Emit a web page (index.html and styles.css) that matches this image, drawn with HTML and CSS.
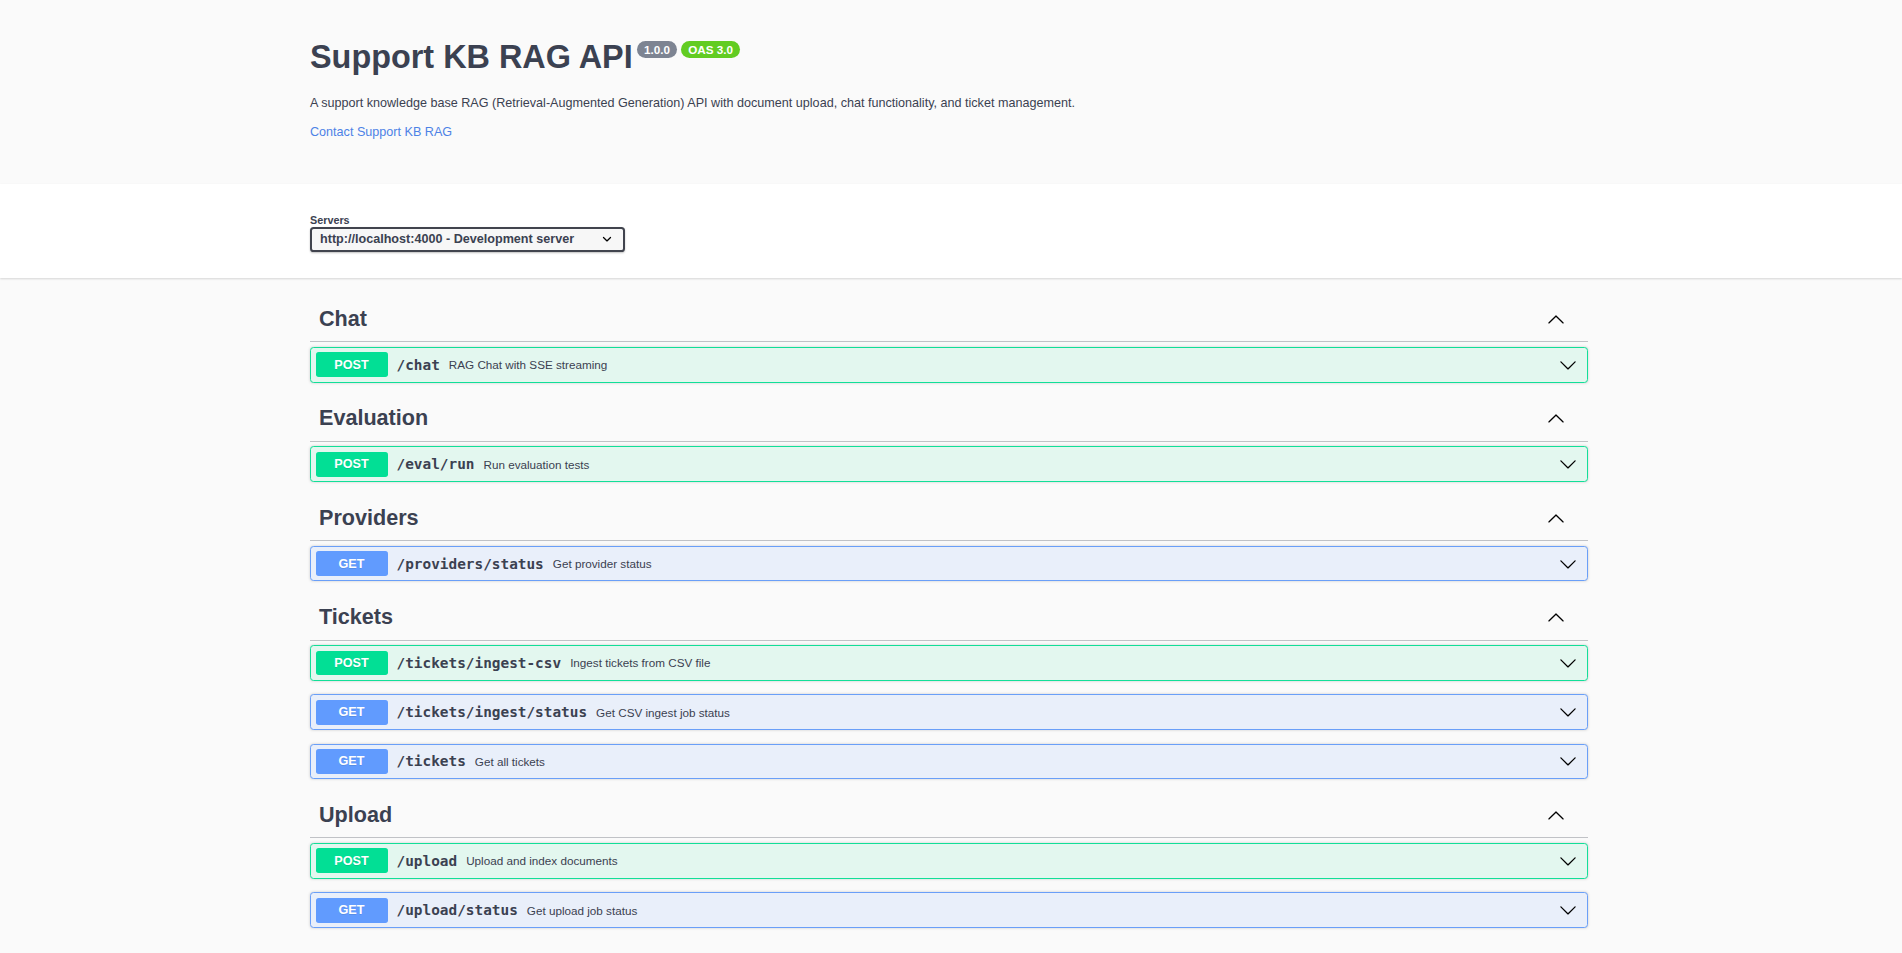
FILE: index.html
```html
<!DOCTYPE html>
<html lang="en">
<head>
<meta charset="utf-8">
<title>Support KB RAG API</title>
<link rel="stylesheet" href="styles.css">
</head>
<body>
<div class="swagger-ui">
  <div class="information-container">
    <div class="wrapper info">
      <h2 class="title">Support KB RAG API<small class="badge version"><pre> 1.0.0 </pre></small><small class="badge oas"><pre> OAS 3.0 </pre></small></h2>
      <p class="description">A support knowledge base RAG (Retrieval-Augmented Generation) API with document upload, chat functionality, and ticket management.</p>
      <a class="contact" href="#">Contact Support KB RAG</a>
    </div>
  </div>

  <div class="scheme-container">
    <div class="wrapper">
      <label class="servers">
        <span class="servers-title">Servers</span>
        <span class="select-wrap">
          <select><option>http://localhost:4000 - Development server</option></select>
          <svg class="select-arrow" viewBox="0 0 20 20"><path d="M13.418 7.859a.695.695 0 0 1 .978 0 .68.68 0 0 1 0 .969l-3.908 3.83a.697.697 0 0 1-.979 0l-3.908-3.830a.68.68 0 0 1 0-.969.695.695 0 0 1 .978 0L10 11l3.418-3.141z"/></svg>
        </span>
      </label>
    </div>
  </div>

  <div class="wrapper operations">
    <section class="tag-section">
      <h3 class="opblock-tag"><span class="tag-name">Chat</span><button class="expand"><svg viewBox="0 0 20 20"><path d="M17.418 14.908c.272.268.709.268.979 0s.271-.701 0-.969l-7.908-7.83a.697.697 0 0 0-.979 0l-7.908 7.83c-.27.268-.27.701 0 .969.271.268.709.268.979 0L10 7.75l7.418 7.158z"/></svg></button></h3>
      <div class="opblock post"><div class="summary"><span class="method">POST</span><span class="path">/chat</span><span class="desc">RAG Chat with SSE streaming</span><button class="arrow-btn"><svg viewBox="0 0 20 20"><path d="M17.418 6.109c.272-.268.709-.268.979 0s.271.701 0 .969l-7.908 7.83c-.27.268-.707.268-.979 0l-7.908-7.83c-.27-.268-.27-.701 0-.969.271-.268.709-.268.979 0L10 13.25l7.418-7.141z"/></svg></button></div></div>
    </section>

    <section class="tag-section">
      <h3 class="opblock-tag"><span class="tag-name">Evaluation</span><button class="expand"><svg viewBox="0 0 20 20"><path d="M17.418 14.908c.272.268.709.268.979 0s.271-.701 0-.969l-7.908-7.83a.697.697 0 0 0-.979 0l-7.908 7.83c-.27.268-.27.701 0 .969.271.268.709.268.979 0L10 7.75l7.418 7.158z"/></svg></button></h3>
      <div class="opblock post"><div class="summary"><span class="method">POST</span><span class="path">/eval/run</span><span class="desc">Run evaluation tests</span><button class="arrow-btn"><svg viewBox="0 0 20 20"><path d="M17.418 6.109c.272-.268.709-.268.979 0s.271.701 0 .969l-7.908 7.83c-.27.268-.707.268-.979 0l-7.908-7.83c-.27-.268-.27-.701 0-.969.271-.268.709-.268.979 0L10 13.25l7.418-7.141z"/></svg></button></div></div>
    </section>

    <section class="tag-section">
      <h3 class="opblock-tag"><span class="tag-name">Providers</span><button class="expand"><svg viewBox="0 0 20 20"><path d="M17.418 14.908c.272.268.709.268.979 0s.271-.701 0-.969l-7.908-7.83a.697.697 0 0 0-.979 0l-7.908 7.83c-.27.268-.27.701 0 .969.271.268.709.268.979 0L10 7.75l7.418 7.158z"/></svg></button></h3>
      <div class="opblock get"><div class="summary"><span class="method">GET</span><span class="path">/providers/status</span><span class="desc">Get provider status</span><button class="arrow-btn"><svg viewBox="0 0 20 20"><path d="M17.418 6.109c.272-.268.709-.268.979 0s.271.701 0 .969l-7.908 7.83c-.27.268-.707.268-.979 0l-7.908-7.83c-.27-.268-.27-.701 0-.969.271-.268.709-.268.979 0L10 13.25l7.418-7.141z"/></svg></button></div></div>
    </section>

    <section class="tag-section">
      <h3 class="opblock-tag"><span class="tag-name">Tickets</span><button class="expand"><svg viewBox="0 0 20 20"><path d="M17.418 14.908c.272.268.709.268.979 0s.271-.701 0-.969l-7.908-7.83a.697.697 0 0 0-.979 0l-7.908 7.83c-.27.268-.27.701 0 .969.271.268.709.268.979 0L10 7.75l7.418 7.158z"/></svg></button></h3>
      <div class="opblock post"><div class="summary"><span class="method">POST</span><span class="path">/tickets/ingest-csv</span><span class="desc">Ingest tickets from CSV file</span><button class="arrow-btn"><svg viewBox="0 0 20 20"><path d="M17.418 6.109c.272-.268.709-.268.979 0s.271.701 0 .969l-7.908 7.83c-.27.268-.707.268-.979 0l-7.908-7.83c-.27-.268-.27-.701 0-.969.271-.268.709-.268.979 0L10 13.25l7.418-7.141z"/></svg></button></div></div>
      <div class="opblock get"><div class="summary"><span class="method">GET</span><span class="path">/tickets/ingest/status</span><span class="desc">Get CSV ingest job status</span><button class="arrow-btn"><svg viewBox="0 0 20 20"><path d="M17.418 6.109c.272-.268.709-.268.979 0s.271.701 0 .969l-7.908 7.83c-.27.268-.707.268-.979 0l-7.908-7.83c-.27-.268-.27-.701 0-.969.271-.268.709-.268.979 0L10 13.25l7.418-7.141z"/></svg></button></div></div>
      <div class="opblock get"><div class="summary"><span class="method">GET</span><span class="path">/tickets</span><span class="desc">Get all tickets</span><button class="arrow-btn"><svg viewBox="0 0 20 20"><path d="M17.418 6.109c.272-.268.709-.268.979 0s.271.701 0 .969l-7.908 7.83c-.27.268-.707.268-.979 0l-7.908-7.83c-.27-.268-.27-.701 0-.969.271-.268.709-.268.979 0L10 13.25l7.418-7.141z"/></svg></button></div></div>
    </section>

    <section class="tag-section">
      <h3 class="opblock-tag"><span class="tag-name">Upload</span><button class="expand"><svg viewBox="0 0 20 20"><path d="M17.418 14.908c.272.268.709.268.979 0s.271-.701 0-.969l-7.908-7.83a.697.697 0 0 0-.979 0l-7.908 7.83c-.27.268-.27.701 0 .969.271.268.709.268.979 0L10 7.75l7.418 7.158z"/></svg></button></h3>
      <div class="opblock post"><div class="summary"><span class="method">POST</span><span class="path">/upload</span><span class="desc">Upload and index documents</span><button class="arrow-btn"><svg viewBox="0 0 20 20"><path d="M17.418 6.109c.272-.268.709-.268.979 0s.271.701 0 .969l-7.908 7.83c-.27.268-.707.268-.979 0l-7.908-7.83c-.27-.268-.27-.701 0-.969.271-.268.709-.268.979 0L10 13.25l7.418-7.141z"/></svg></button></div></div>
      <div class="opblock get"><div class="summary"><span class="method">GET</span><span class="path">/upload/status</span><span class="desc">Get upload job status</span><button class="arrow-btn"><svg viewBox="0 0 20 20"><path d="M17.418 6.109c.272-.268.709-.268.979 0s.271.701 0 .969l-7.908 7.83c-.27.268-.707.268-.979 0l-7.908-7.83c-.27-.268-.27-.701 0-.969.271-.268.709-.268.979 0L10 13.25l7.418-7.141z"/></svg></button></div></div>
    </section>
  </div>
</div>
</body>
</html>
```

FILE: styles.css
```css
* {
  box-sizing: border-box;
}

html,
body {
  margin: 0;
  padding: 0;
}

body {
  background: #fafafa;
  font-family: "Liberation Sans", Arial, sans-serif;
  color: #3b4151;
}

.wrapper {
  width: 1278px;
  margin-left: calc(50% - 641px);
}

/* ---------- info ---------- */
.info {
  padding: 39px 0 42.5px;
}

.title {
  margin: 0;
  font-size: 32.4px;
  line-height: 37px;
  font-weight: 700;
  color: #3b4151;
}

.badge {
  display: inline-block;
  position: relative;
  top: -2px;
  vertical-align: super;
  margin-left: 4.5px;
  padding: 1.8px 3.6px;
  border-radius: 51px;
  background: #7d8492;
  font-size: 11.7px;
}

.badge pre {
  margin: 0;
  font-family: "Liberation Sans", Arial, sans-serif;
  font-size: 11.7px;
  font-weight: 700;
  line-height: normal;
  color: #fff;
}

.badge.oas {
  background: #62cc22;
}

.description {
  margin: 17.6px 0 0;
  font-size: 12.6px;
  line-height: 18px;
  color: #3b4151;
}

.contact {
  display: block;
  margin-top: 11.5px;
  font-size: 12.6px;
  line-height: 18px;
  color: #4d82e6;
  text-decoration: none;
}

/* ---------- servers ---------- */
.scheme-container {
  background: #fff;
  box-shadow: 0 1px 2px 0 rgba(0, 0, 0, 0.15);
  padding: 30px 0 26px;
  margin-bottom: 19.2px;
}

.servers {
  display: flex;
  flex-direction: column;
  align-items: flex-start;
}

.servers-title {
  font-size: 10.8px;
  line-height: 13px;
  font-weight: 700;
  color: #3b4151;
}

.select-wrap {
  position: relative;
  display: block;
  width: 315px;
}

.select-wrap select {
  appearance: none;
  -webkit-appearance: none;
  display: block;
  width: 315px;
  height: 25px;
  margin: 0;
  padding: 0 36px 0 8px;
  border: 2px solid #41444e;
  border-radius: 3.6px;
  background: #f7f7f7;
  box-shadow: 0 1px 2px 0 rgba(0, 0, 0, 0.25);
  font: 700 12.6px "Liberation Sans", Arial, sans-serif;
  color: #3b4151;
}

.select-arrow {
  position: absolute;
  right: 9.5px;
  top: 3.5px;
  width: 18px;
  height: 18px;
  fill: #000;
  pointer-events: none;
}

/* ---------- operations ---------- */
.operations {
  padding-bottom: 20px;
}

.opblock-tag {
  display: flex;
  align-items: center;
  margin: 0 0 4.5px;
  padding: 9px 18px 9.6px 9px;
  border-bottom: 1px solid rgba(59, 65, 81, 0.3);
  font-size: 21.6px;
  line-height: 26px;
  font-weight: 700;
  color: #3b4151;
}

.tag-name {
  flex: 1;
}

.expand,
.arrow-btn {
  display: flex;
  align-items: center;
  padding: 0 5.4px;
  border: 0;
  background: none;
}

.expand svg,
.arrow-btn svg {
  width: 18px;
  height: 18px;
  fill: #000;
}

.opblock {
  margin-bottom: 13.5px;
  border: 1px solid #000;
  border-radius: 3.6px;
  box-shadow: 0 0 3px rgba(0, 0, 0, 0.19);
}

.opblock.post {
  background: #e3f7ef;
  border-color: #12df98;
}

.opblock.get {
  background: #e9effa;
  border-color: #6a9ff8;
}

.summary {
  display: flex;
  align-items: center;
  padding: 4.5px;
}

.method {
  min-width: 72px;
  padding: 5.4px 0;
  border-radius: 2.7px;
  font-size: 12.6px;
  line-height: normal;
  font-weight: 700;
  color: #fff;
  text-align: center;
  text-shadow: 0 1px 0 rgba(0, 0, 0, 0.1);
}

.post .method {
  background: #02df95;
}

.get .method {
  background: #619bfe;
}

.path {
  padding: 0 9px;
  font-family: "DejaVu Sans Mono", monospace;
  font-size: 14.4px;
  font-weight: 700;
  color: #3b4151;
}

.desc {
  flex: 1;
  font-size: 11.7px;
  color: #3b4151;
}
```
